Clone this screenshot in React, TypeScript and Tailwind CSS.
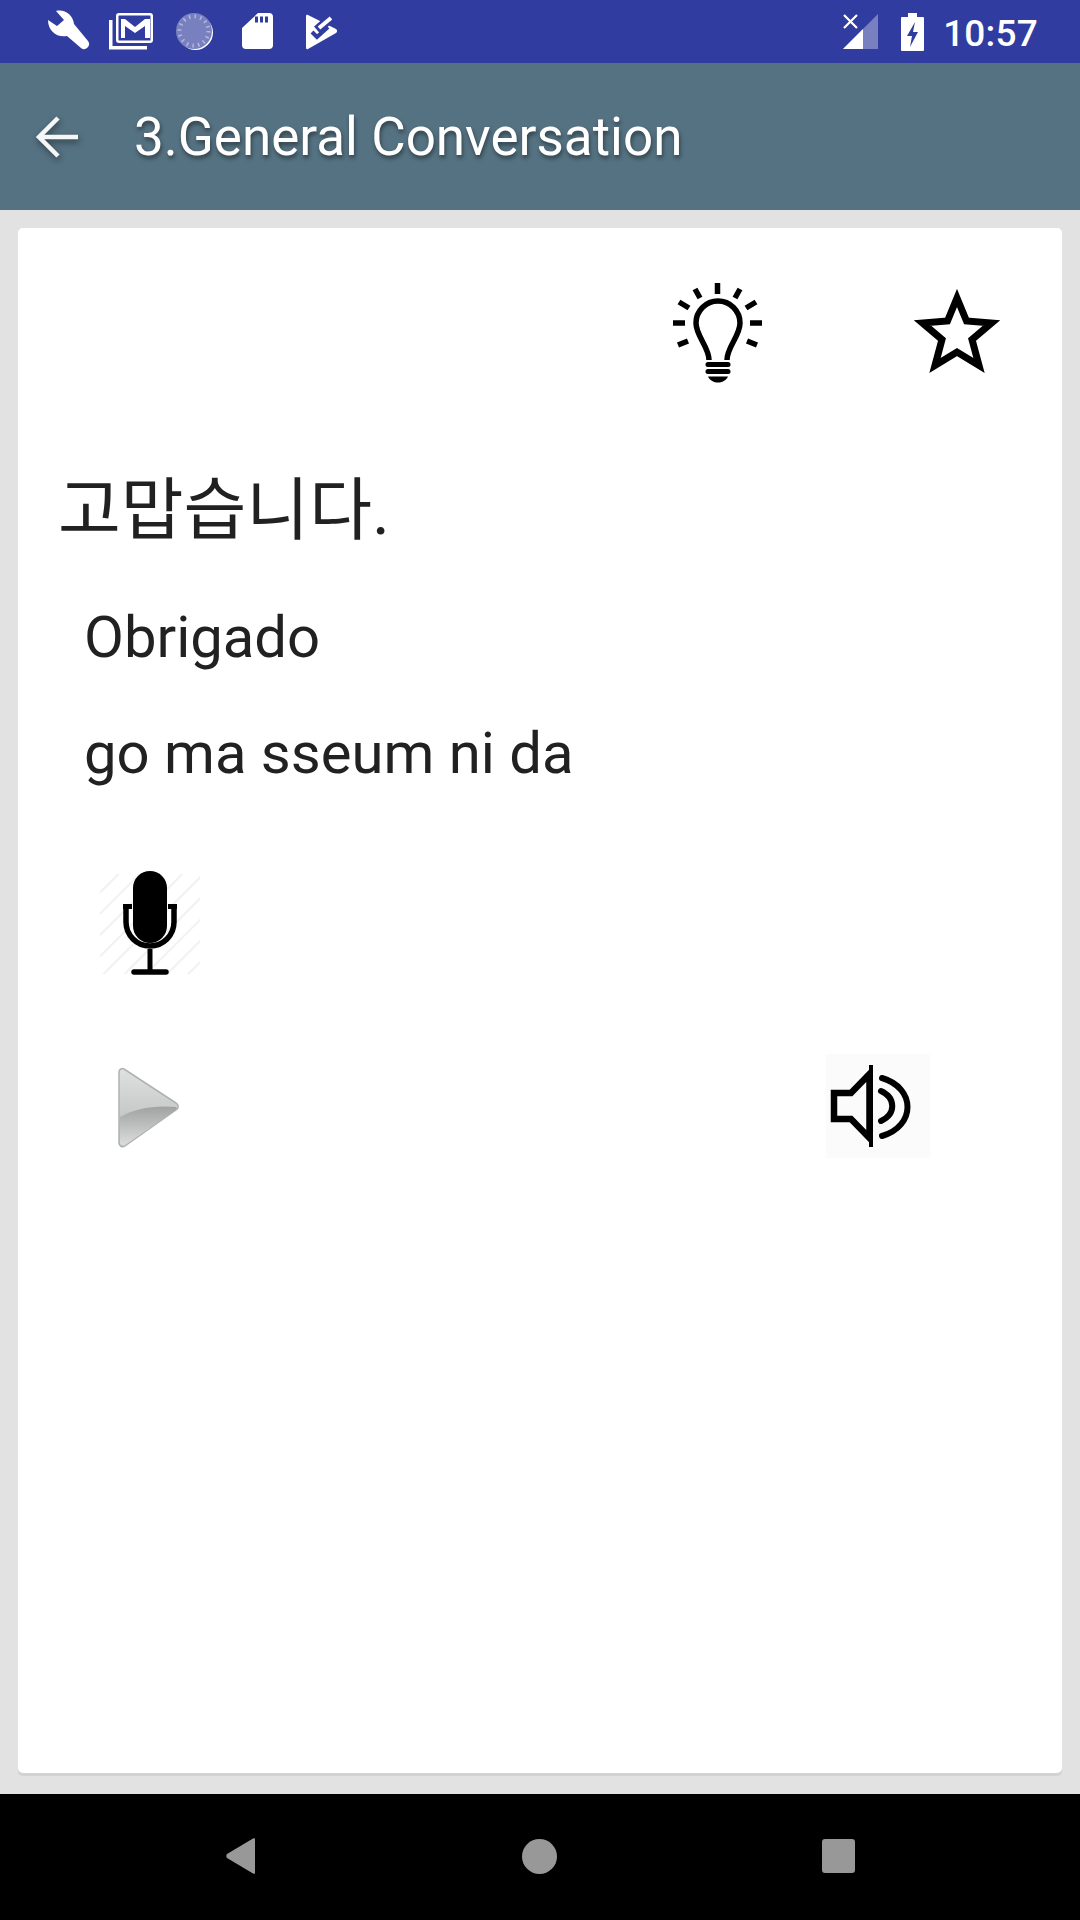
const font = { fontFamily: '"Roboto", "Noto Sans CJK KR", sans-serif' };

const StatusLeft = () => (
  <svg width="259" height="63" viewBox="0 0 259 63" fill="#fff" className="ml-[46px]">
    {/* wrench */}
    <path d="M10 11c9-2 17 4 18 13l14 17a5 5 0 0 1-7 7L21 36C11 38 2 31 2 20l9 6 7-6z" />
    {/* gmail stack */}
    <path d="M63 20h3.500v26H101v3.500H63z" />
    <path
      fillRule="evenodd"
      d="M73 13h31a3 3 0 0 1 3 3v24a3 3 0 0 1-3 3H73a3 3 0 0 1-3-3V16a3 3 0 0 1 3-3zm0 2.500a.5.5 0 0 0-.5.5v24a.5.5 0 0 0 .5.5h31a.5.5 0 0 0 .5-.5V16a.5.5 0 0 0-.5-.5z"
    />
    <path d="M75 19h4l10 8 10-8h5v19h-5V26l-10 7-10-7v12h-4z" />
    {/* spinner */}
    <circle cx="149.500" cy="32.500" r="17.500" fill="#fff" />
    <circle cx="148" cy="31" r="18" fill="#7980c0" />
    <circle cx="148" cy="31" r="14.500" fill="none" stroke="#b3b7dc" strokeWidth="4" strokeDasharray="1.500 4.200" />
    {/* sd card */}
    <path
      fillRule="evenodd"
      d="M212 13h11a4 4 0 0 1 4 4v28a4 4 0 0 1-4 4h-23a4 4 0 0 1-4-4V28zm-3 3.500v6h3v-6zm5 0v6h3v-6zm5 0v6h3v-6z"
    />
  </svg>
);

const PlayStoreCheck = () => (
  <svg width="34" height="40" viewBox="0 0 34 40">
    <path fill="#fff" d="M1 4c0-1 1-1.500 2-1l28 14c1.500 1 1.500 3 0 4L3 37c-1 .5-2 0-2-1z" />
    <path d="M12 18L27 5" stroke="#303c9f" strokeWidth="9" fill="none" />
    <path d="M14 16L26 6" stroke="#fff" strokeWidth="4" fill="none" />
    <path d="M7 20l5 5 11-10" stroke="#303c9f" strokeWidth="4" fill="none" />
  </svg>
);

const StatusRight = () => (
  <div className="flex items-center mr-[42px]">
    <svg width="36" height="36" viewBox="0 0 36 36" fill="#fff" className="mr-[22px]">
      <path d="M0 35L35 0v35z" fill="#7980c0" />
      <path d="M0 35l20-20v20z" fill="#fff" />
      <path d="M1 1l13 13M14 1L1 14" stroke="#fff" strokeWidth="2.200" fill="none" />
    </svg>
    <svg width="23" height="38" viewBox="0 0 23 38" fill="#fff" className="mr-[19px]">
      <path
        fillRule="evenodd"
        d="M7 0h9v4h6a1 1 0 0 1 1 1v32a1 1 0 0 1-1 1H1a1 1 0 0 1-1-1V5a1 1 0 0 1 1-1h6zm7 9l-8 14h5l-2 11 8-15h-5z"
      />
    </svg>
    <span className="mt-[3px] text-[37px] leading-none font-medium text-white tracking-[0.2px]" style={font}>
      10:57
    </span>
  </div>
);

const Bulb = () => (
  <svg width="90" height="102" viewBox="0 0 90 102" fill="none" stroke="#000" className="block">
    <g strokeWidth="5.500">
      <path d="M44.500 1v11M22 7l5 9M67 7l-5 9M6 20l10 6M83 20l-10 6M0 41h12M77 41h12M5 63l10-4M84 63l-10-4" />
    </g>
    <path d="M36 78c0-13-13-24-13-37a22 22 0 0 1 44 0c0 13-13 24-13 37" strokeWidth="5.500" />
    <g fill="#000" stroke="none">
      <path d="M35 80h20a2.500 2.500 0 0 1 0 5H35a2.500 2.500 0 0 1 0-5z" />
      <path d="M35 87h20a2.500 2.500 0 0 1 0 5H35a2.500 2.500 0 0 1 0-5z" />
      <path d="M35 94.500h20c-2 4-6 6-10 6s-8-2-10-6z" />
    </g>
  </svg>
);

const Star = () => (
  <svg width="88" height="86" viewBox="0 0 88 86" fill="none" className="block">
    <path
      d="M44 9L53.500 32L78.500 34L59 50.500L66 76.500L44 63L22 76.500L29 50.500L9.500 34L34.500 32Z"
      stroke="#000"
      strokeWidth="7"
      strokeMiterlimit="10"
    />
  </svg>
);

const Mic = () => (
  <svg width="104" height="106" viewBox="0 0 104 106" fill="none" className="block">
    <defs>
      <pattern id="hatch" width="15" height="15" patternUnits="userSpaceOnUse" patternTransform="rotate(-45)">
        <rect width="15" height="2" fill="#f1f1f1" />
      </pattern>
    </defs>
    <rect x="1" y="3" width="100" height="100" fill="url(#hatch)" />
    <rect x="34" y="0" width="34" height="72" rx="17" fill="#000" />
    <path d="M27 36v15a24 24 0 0 0 48 0V36" stroke="#000" strokeWidth="5.500" />
    <path d="M24 35.500h9M69 35.500h9" stroke="#000" strokeWidth="5" />
    <path d="M51 78v21" stroke="#000" strokeWidth="5" />
    <path d="M35 101h32" stroke="#000" strokeWidth="5.500" strokeLinecap="round" />
  </svg>
);

const Play = () => (
  <svg width="64" height="82" viewBox="0 0 64 82" className="block">
    <defs>
      <linearGradient id="playTop" x1="0" y1="0" x2="0" y2="1">
        <stop offset="0" stopColor="#dfe1e1" />
        <stop offset="1" stopColor="#b7b9b9" />
      </linearGradient>
      <linearGradient id="playBottom" x1="0" y1="0" x2="0" y2="1">
        <stop offset="0" stopColor="#a0a2a2" />
        <stop offset="1" stopColor="#dcdddd" />
      </linearGradient>
    </defs>
    <path
      d="M2 5c0-3 3-4 5-3l52 34c3 2 3 5 0 7L8 79c-3 2-6 0-6-3z"
      fill="url(#playTop)"
      stroke="#b0b2b2"
      strokeWidth="1.500"
    />
    <path d="M3 50c14-8 34-12 56-10 1 1 1 2 0 3L8 78c-2 1-5 0-5-2z" fill="url(#playBottom)" />
  </svg>
);

const Speaker = () => (
  <svg width="104" height="104" viewBox="0 0 104 104" fill="none" className="block">
    <rect width="104" height="104" fill="#fbfbfb" />
    <path d="M8 39H25L43.500 20V84L25 65H8Z" stroke="#000" strokeWidth="6.500" />
    <path d="M45 11V93" stroke="#000" strokeWidth="4" />
    <path d="M55 37C70 44 70 60 55 67" stroke="#000" strokeWidth="6" strokeLinecap="round" />
    <path d="M56 24C90 34 90 72 56 82" stroke="#000" strokeWidth="6" strokeLinecap="round" />
  </svg>
);

const NavBar = () => (
  <div className="h-[126px] bg-black flex items-center">
    <div className="w-full flex items-center -mt-[2px]">
      <svg width="30" height="36" viewBox="0 0 30 36" fill="#989898" className="ml-[226px]">
        <path d="M29 1v34c0 1-1 1-2 .500L1 20c-1-1-1-3 0-4L27 .500c1-.500 2 0 2 .500z" />
      </svg>
      <div className="ml-[266px] w-[35px] h-[35px] rounded-full bg-[#989898]" />
      <div className="ml-[265px] w-[33px] h-[34px] rounded-[3px] bg-[#989898]" />
    </div>
  </div>
);

export default function App() {
  return (
    <div className="w-[1080px] h-[1920px] flex flex-col overflow-hidden bg-[#e2e2e2]" style={font}>
      {/* status bar */}
      <div className="h-[63px] bg-[#303c9f] flex items-center justify-between">
        <div className="flex items-center">
          <StatusLeft />
          <PlayStoreCheck />
        </div>
        <StatusRight />
      </div>

      {/* toolbar */}
      <div className="h-[147px] bg-[#557282] flex items-center">
        <svg width="48" height="48" viewBox="0 0 48 48" fill="none" className="ml-[34px] [filter:drop-shadow(1px_3px_3px_rgba(0,0,0,0.45))]">
          <path d="M44 24H6M24 5L5 24l19 19" stroke="#f4f6f7" strokeWidth="4.500" />
        </svg>
        <h1 className="ml-[52px] mt-[2px] text-[53px] leading-none text-white [text-shadow:1px_3px_4px_rgba(0,0,0,0.45)]">
          3.General Conversation
        </h1>
      </div>

      {/* content */}
      <div className="flex-1 px-[18px] pt-[18px] pb-[21px] flex flex-col">
        <div className="flex-1 bg-white rounded-[5px] shadow-[0_3px_0_#d2d2d2] flex flex-col">
          <div className="flex items-start justify-end mt-[54px]">
            <Bulb />
            <div className="ml-[150px] mr-[61px] mt-[7px]">
              <Star />
            </div>
          </div>

          <p className="ml-[40px] mt-[87px] text-[68.25px] leading-[80px] text-[#212121]">고맙습니다.</p>
          <p className="ml-[66px] mt-[51px] text-[58px] leading-[70px] text-[#212121]">Obrigado</p>
          <p className="ml-[66px] mt-[46px] text-[58px] leading-[70px] text-[#212121]">go ma sseum ni da</p>

          <div className="ml-[81px] mt-[83px]">
            <Mic />
          </div>

          <div className="flex items-start justify-between mt-[90px]">
            <div className="ml-[99px]">
              <Play />
            </div>
            <div className="mr-[132px] -mt-[13px]">
              <Speaker />
            </div>
          </div>
        </div>
      </div>

      <NavBar />
    </div>
  );
}
